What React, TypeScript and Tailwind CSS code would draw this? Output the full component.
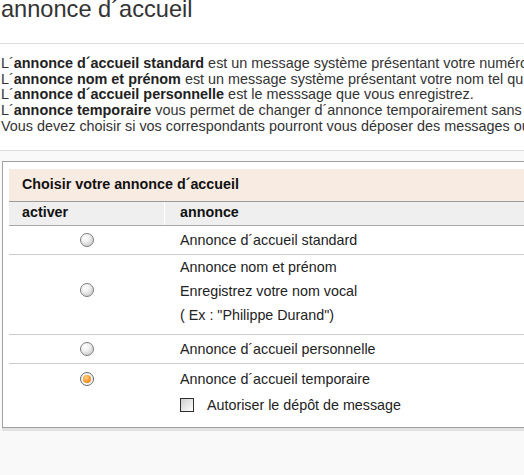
import React from 'react';

const Radio = ({ checked = false }: { checked?: boolean }) => (
  <span className={`flex h-[14px] w-[14px] items-center justify-center rounded-full border ${checked ? 'border-[#6a6a6a] bg-[#f4f4f4]' : 'border-[#7d7d7d] bg-[radial-gradient(circle_at_35%_30%,#ffffff_0%,#f1f1f1_35%,#bdbdbd_100%)]'}`}>
    {checked && <span className="h-[8px] w-[8px] rounded-full bg-[radial-gradient(circle_at_40%_35%,#ffd08a_0%,#f7931e_60%,#e2680e_100%)]" />}
  </span>
);

const Checkbox = () => (
  <span className="inline-block h-[14px] w-[14px] border border-[#2f2f2f] bg-gradient-to-br from-[#cfcfcf] to-white" />
);

const intro: [string, string, string][] = [
  ['L´', 'annonce d´accueil standard', ' est un message système présentant votre numéro de téléphone à vos correspondants.'],
  ['L´', 'annonce nom et prénom', ' est un message système présentant votre nom tel qu´il a été enregistré.'],
  ['L´', 'annonce d´accueil personnelle', ' est le messsage que vous enregistrez.'],
  ['L´', 'annonce temporaire', ' vous permet de changer d´annonce temporairement sans effacer votre annonce personnelle.'],
  ['Vous devez choisir si vos correspondants pourront vous déposer des messages ou non.', '', '']
];

export default function App() {
  return (
    <div className="h-[475px] w-[524px] overflow-hidden bg-white font-['Liberation_Sans',Arial,sans-serif] text-[#333]">
      <div className="flex h-full w-[800px] flex-col">
        <div className="h-[44px] border-b border-[#dddddd] pl-[1px]">
          <h1 className="-mt-[2px] text-[23.6px] leading-[23px] font-normal text-[#333]">annonce d´accueil</h1>
        </div>

        <div className="pt-[12px] pb-[15px] pl-[1px] text-[14.4px] leading-[15.7px]">
          {intro.map(([a, b, c], i) => (
            <div key={i} className="whitespace-nowrap">
              {a}<b className="text-[#222]">{b}</b>{c}
            </div>
          ))}
        </div>

        <div className="flex-1 border-t border-[#dddddd] bg-[#f9f9f9] pt-[10px] pl-[2px]">
          <div className="border-y border-l border-[#a0a0a0] bg-white pt-[7px] pl-[6px] pb-[10px] shadow-[0_3px_0_#e2e2e2] text-[14.3px] text-[#222]">
            <div className="flex h-[33px] items-center border-b border-[#9a9a9a] bg-[#f8ebe1] pl-[13px] font-bold text-[#111]">
              Choisir votre annonce d´accueil
            </div>
            <div className="flex h-[24px] border-b border-[#a8a8a8] bg-[#efefef] font-bold text-[#111]">
              <div className="flex w-[156px] items-center border-r border-white pl-[13px]">activer</div>
              <div className="flex items-center pl-[15px]">annonce</div>
            </div>

            <div className="flex border-b border-[#cccccc] py-[2px]">
              <div className="flex w-[156px] items-center justify-center"><Radio /></div>
              <div className="pl-[15px] leading-[24px]">Annonce d´accueil standard</div>
            </div>

            <div className="flex border-b border-[#cccccc] pt-0 pb-[7px]">
              <div className="flex w-[156px] items-center justify-center pb-[2px]"><Radio /></div>
              <div className="pl-[15px] leading-[24px]">
                <div>Annonce nom et prénom</div>
                <div>Enregistrez votre nom vocal</div>
                <div>( Ex : "Philippe Durand")</div>
              </div>
            </div>

            <div className="flex border-b border-[#cccccc] py-[2px]">
              <div className="flex w-[156px] items-center justify-center"><Radio /></div>
              <div className="pl-[15px] leading-[24px]">Annonce d´accueil personnelle</div>
            </div>

            <div className="flex pt-[3px]">
              <div className="flex h-[24px] w-[156px] items-center justify-center"><Radio checked /></div>
              <div className="pl-[15px] leading-[24px]">
                <div>Annonce d´accueil temporaire</div>
                <label className="mt-[2px] flex items-center gap-[13px]">
                  <Checkbox />
                  <span>Autoriser le dépôt de message</span>
                </label>
              </div>
            </div>
          </div>
        </div>
      </div>
    </div>
  );
}
